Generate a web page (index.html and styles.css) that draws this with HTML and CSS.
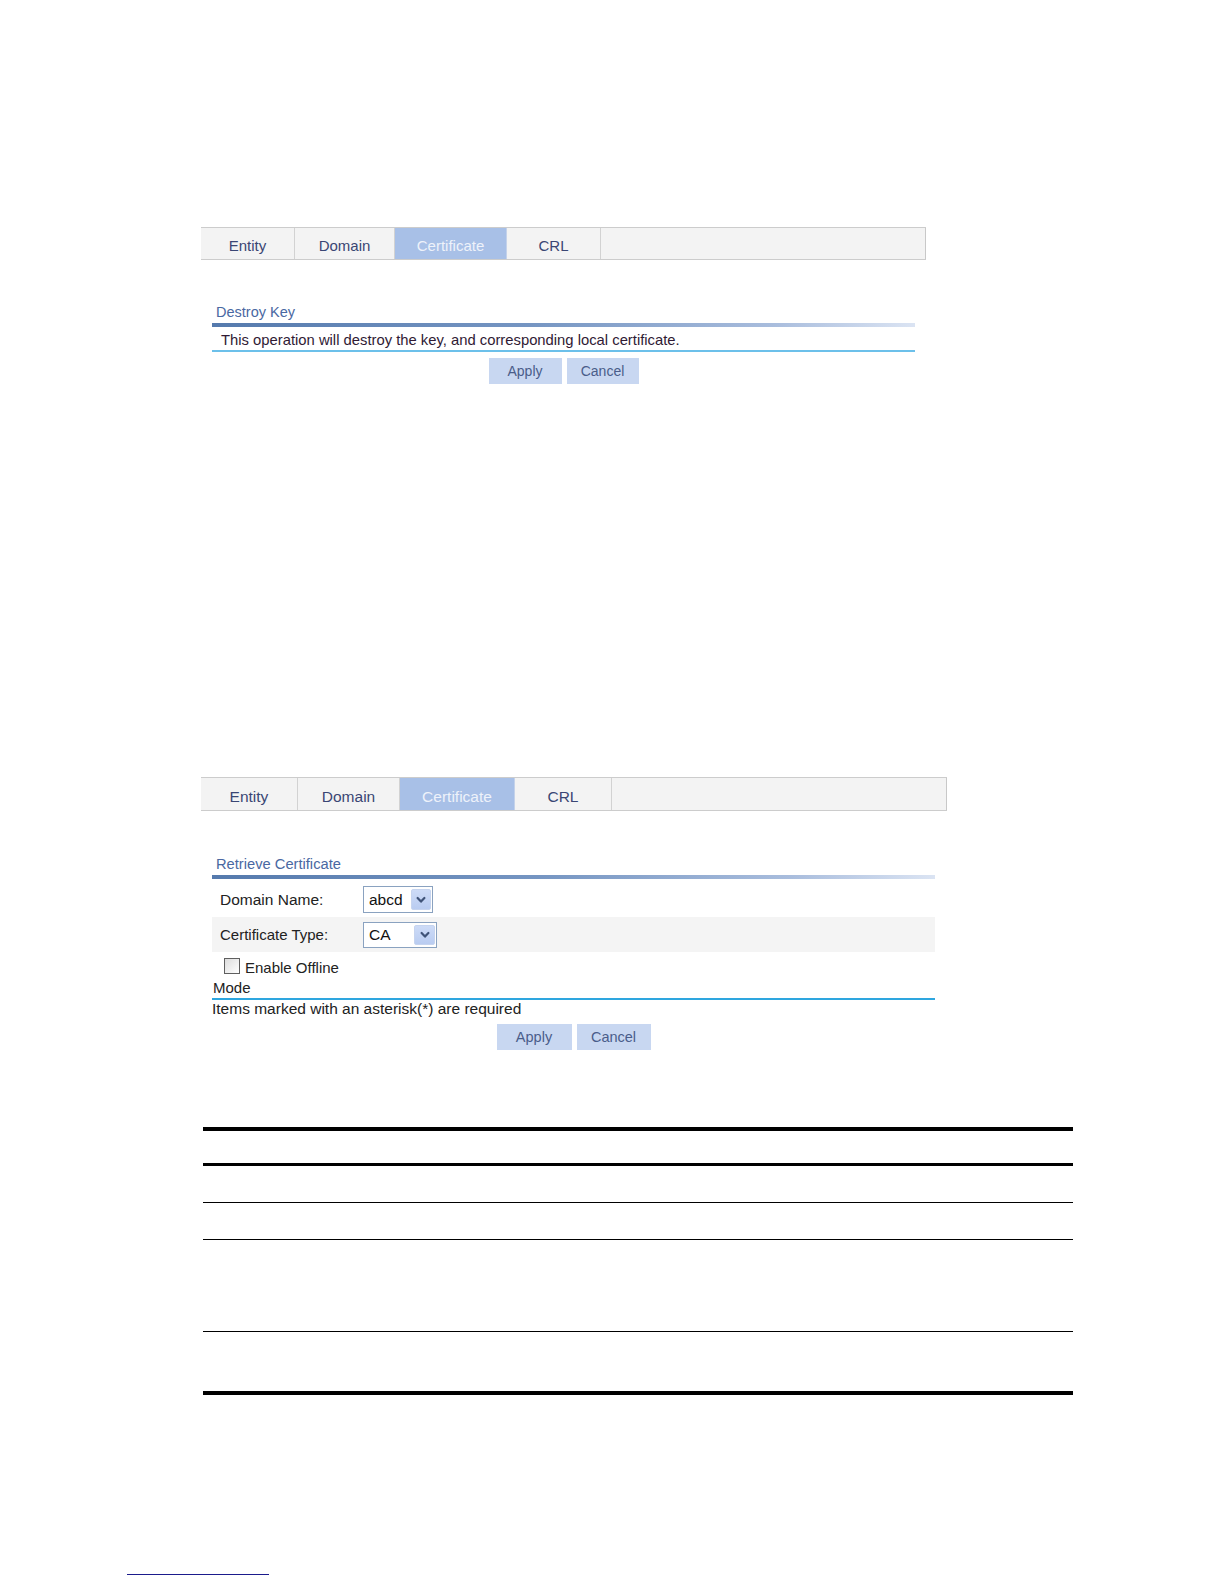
FILE: index.html
```html
<!DOCTYPE html>
<html lang="en">
<head>
<meta charset="utf-8">
<title>PKI Certificate</title>
<link rel="stylesheet" href="styles.css">
</head>
<body>
<div class="page">
  <section class="shot shot-a">
    <nav class="tabs tabs-a">
      <span class="tab w1">Entity</span>
      <span class="tab w2">Domain</span>
      <span class="tab w3 active">Certificate</span>
      <span class="tab w4">CRL</span>
      <span class="tab-fill"></span>
    </nav>
    <div class="panel panel-a">
      <h2 class="panel-title">Destroy Key</h2>
      <div class="title-bar"></div>
      <p class="message">This operation will destroy the key, and corresponding local certificate.</p>
      <div class="actions">
        <button class="btn" type="button">Apply</button>
        <button class="btn" type="button">Cancel</button>
      </div>
    </div>
  </section>

  <section class="shot shot-b">
    <nav class="tabs tabs-b">
      <span class="tab w1">Entity</span>
      <span class="tab w2">Domain</span>
      <span class="tab w3 active">Certificate</span>
      <span class="tab w4">CRL</span>
      <span class="tab-fill"></span>
    </nav>
    <div class="panel panel-b">
      <h2 class="panel-title">Retrieve Certificate</h2>
      <div class="title-bar"></div>
      <div class="form-row row-1">
        <span class="label">Domain Name:</span>
        <div class="select sel-1">
          <span class="select-value">abcd</span>
          <span class="select-btn"><svg width="10" height="8" viewBox="0 0 10 8"><polyline points="1.6,2 5,5.6 8.4,2" fill="none" stroke="#3f5378" stroke-width="2.2" stroke-linecap="round" stroke-linejoin="round"/></svg></span>
        </div>
      </div>
      <div class="form-row row-2">
        <span class="label">Certificate Type:</span>
        <div class="select sel-2">
          <span class="select-value">CA</span>
          <span class="select-btn"><svg width="10" height="8" viewBox="0 0 10 8"><polyline points="1.6,2 5,5.6 8.4,2" fill="none" stroke="#3f5378" stroke-width="2.2" stroke-linecap="round" stroke-linejoin="round"/></svg></span>
        </div>
      </div>
      <div class="offline-wrap">
        <div class="offline"><span class="checkbox"></span>Enable Offline Mode</div>
      </div>
      <p class="required">Items marked with an asterisk(*) are required</p>
      <div class="actions">
        <button class="btn" type="button">Apply</button>
        <button class="btn" type="button">Cancel</button>
      </div>
    </div>
  </section>

  <div class="doc-table">
    <div class="doc-row head"></div>
    <div class="doc-row r36"></div>
    <div class="doc-row r36"></div>
    <div class="doc-row r91"></div>
    <div class="doc-row last"></div>
  </div>

  <div class="foot-rule"></div>
</div>
</body>
</html>
```

FILE: styles.css
```css
html, body {
  margin: 0;
  padding: 0;
  background: #ffffff;
}

body {
  font-family: "Liberation Sans", Arial, sans-serif;
  color: #222222;
}

.page {
  padding-top: 227px;
  width: 1224px;
}

.shot {
  margin-left: 201px;
}

.shot-b {
  margin-top: 393px;
}

/* ---------- tabs ---------- */
.tabs {
  display: flex;
  box-sizing: border-box;
  background: #f3f3f3;
  border-top: 1px solid #cccccc;
  border-bottom: 1px solid #cccccc;
}

.tabs-a {
  width: 725px;
  height: 33px;
  font-size: 15px;
}

.tabs-b {
  width: 746px;
  height: 34px;
  font-size: 15.5px;
}

.tab {
  box-sizing: border-box;
  border-right: 1px solid #d2d2d2;
  text-align: center;
  color: #3a4674;
  padding-top: 5px;
  line-height: 26px;
  white-space: nowrap;
}

.tabs-b .tab {
  line-height: 27px;
}

.tab.active {
  background: #a8c0e7;
  color: #eef2fa;
  border-right-color: #c4d2ea;
}

.tab-fill {
  flex: 1;
  border-right: 1px solid #c8c8c8;
}

.tabs-a .w1 { width: 94px; }
.tabs-a .w2 { width: 100px; }
.tabs-a .w3 { width: 112px; }
.tabs-a .w4 { width: 94px; }

.tabs-b .w1 { width: 97px; }
.tabs-b .w2 { width: 102px; }
.tabs-b .w3 { width: 115px; }
.tabs-b .w4 { width: 97px; }

/* ---------- panels ---------- */
.panel {
  margin-left: 11px;
}

.panel-a {
  width: 703px;
  margin-top: 43px;
}

.panel-b {
  width: 723px;
  margin-top: 44px;
}

.panel-title {
  margin: 0;
  padding-left: 4px;
  font-weight: normal;
  font-size: 14.5px;
  line-height: 18px;
  color: #4a68a2;
}

.panel-b .panel-title {
  font-size: 14.7px;
}

.title-bar {
  margin-top: 2px;
  height: 4px;
  background: linear-gradient(to right, #557aad 0%, #7595c2 45%, #a9bddd 80%, #dbe4f3 100%);
}

.message {
  margin: 0;
  padding: 4px 0 1px 9px;
  font-size: 14.8px;
  line-height: 18px;
  color: #301a34;
  border-bottom: 2px solid #6cc0ea;
}

.actions {
  display: flex;
  justify-content: center;
  gap: 5px;
  margin-top: 6px;
}

.btn {
  box-sizing: border-box;
  height: 26px;
  padding: 0;
  border: none;
  background: #c8d7f1;
  color: #4a5d8a;
  font-family: "Liberation Sans", Arial, sans-serif;
  font-size: 14px;
  line-height: 26px;
}

.panel-a .btn:first-child { width: 73px; }
.panel-a .btn:last-child { width: 72px; }

.panel-b .btn {
  font-size: 14.5px;
}
.panel-b .btn:first-child { width: 75px; }
.panel-b .btn:last-child { width: 74px; }

/* ---------- form ---------- */
.form-row {
  display: flex;
  align-items: center;
  box-sizing: border-box;
}

.row-1 {
  height: 38px;
  padding-top: 3px;
}

.row-2 {
  height: 35px;
  background: #f4f4f4;
}

.label {
  box-sizing: border-box;
  width: 151px;
  padding-left: 8px;
  font-size: 15px;
  line-height: 18px;
  color: #222222;
}

.row-1 .label {
  font-size: 15.5px;
}

.select {
  box-sizing: border-box;
  display: flex;
  align-items: center;
  justify-content: space-between;
  border: 1px solid #8aa2c0;
  background: #ffffff;
  padding: 2px 1px 2px 5px;
}

.sel-1 {
  width: 70px;
  height: 27px;
}

.sel-2 {
  width: 74px;
  height: 26px;
}

.select-value {
  font-size: 15.5px;
  line-height: 18px;
  color: #111111;
}

.select-btn {
  box-sizing: border-box;
  width: 20px;
  align-self: stretch;
  display: flex;
  align-items: center;
  justify-content: center;
  background: linear-gradient(#cddbf7, #b9ccf1);
  border: 1px solid #c6d4ef;
  border-radius: 2px;
}

.sel-2 .select-btn {
  width: 21px;
}

.offline-wrap {
  margin-top: 6px;
  border-bottom: 2px solid #2ea6df;
}

.offline {
  width: 150px;
  padding-left: 1px;
  font-size: 15px;
  line-height: 20px;
  color: #222222;
}

.checkbox {
  display: inline-block;
  box-sizing: border-box;
  width: 16px;
  height: 16px;
  margin-left: 11px;
  margin-right: 5px;
  vertical-align: top;
  border: 1px solid #5f5f5f;
  background: linear-gradient(135deg, #dcdcdc, #ffffff);
}

.required {
  margin: 0;
  font-size: 15.5px;
  line-height: 18px;
  color: #222222;
}

/* ---------- document table ---------- */
.doc-table {
  margin-top: 77px;
  margin-left: 203px;
  width: 870px;
  border-top: 4px solid #000000;
  border-bottom: 4px solid #000000;
}

.doc-row {
  border-bottom: 1px solid #000000;
}

.doc-row.head {
  height: 32px;
  border-bottom: 3px solid #000000;
}

.doc-row.r36 {
  height: 36px;
}

.doc-row.r91 {
  height: 91px;
}

.doc-row.last {
  height: 59px;
  border-bottom: none;
}

.foot-rule {
  margin-top: 179px;
  margin-left: 127px;
  width: 142px;
  height: 1px;
  background: #1b1b8c;
}
```
